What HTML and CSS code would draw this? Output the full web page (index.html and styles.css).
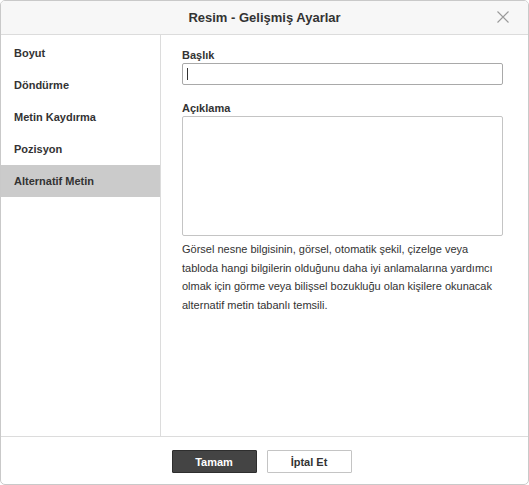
FILE: index.html
```html
<!DOCTYPE html>
<html lang="tr">
<head>
<meta charset="utf-8">
<link rel="stylesheet" href="styles.css">
</head>
<body>
<div class="dialog">
  <div class="header">
    <div class="title">Resim - Gelişmiş Ayarlar</div>
    <svg class="close" width="12" height="12" viewBox="0 0 12 12"><path d="M0.5 0.5 L11.5 11.5 M11.5 0.5 L0.5 11.5" stroke="#9a9a9a" stroke-width="1.1" fill="none"/></svg>
  </div>
  <div class="body">
    <div class="sidebar">
      <div class="item">Boyut</div>
      <div class="item">Döndürme</div>
      <div class="item">Metin Kaydırma</div>
      <div class="item">Pozisyon</div>
      <div class="item active">Alternatif Metin</div>
    </div>
    <div class="content">
      <div class="label">Başlık</div>
      <div class="input"><span class="caret"></span></div>
      <div class="label second">Açıklama</div>
      <div class="textarea"></div>
      <p class="desc">Görsel nesne bilgisinin, görsel, otomatik şekil, çizelge veya tabloda hangi bilgilerin olduğunu daha iyi anlamalarına yardımcı olmak için görme veya bilişsel bozukluğu olan kişilere okunacak alternatif metin tabanlı temsili.</p>
    </div>
  </div>
  <div class="footer">
    <button class="btn primary">Tamam</button>
    <button class="btn">İptal Et</button>
  </div>
</div>
</body>
</html>
```

FILE: styles.css
```css
html, body {
  margin: 0;
  padding: 0;
  background: #ffffff;
}
body {
  font-family: "Liberation Sans", Arial, sans-serif;
  color: #333333;
}
.dialog {
  width: 529px;
  height: 485px;
  box-sizing: border-box;
  border: 1px solid #c9c9c9;
  border-radius: 5px;
  overflow: hidden;
  display: flex;
  flex-direction: column;
  background: #ffffff;
}
.header {
  height: 33px;
  flex: none;
  background: #f7f7f7;
  border-bottom: 1px solid #dcdcdc;
  display: flex;
  align-items: center;
  justify-content: center;
  position: relative;
}
.title {
  font-size: 13px;
  font-weight: bold;
  color: #333333;
}
.close {
  position: absolute;
  right: 19px;
  top: 10px;
}
.body {
  flex: 1;
  display: flex;
  min-height: 0;
}
.sidebar {
  width: 159px;
  flex: none;
  border-right: 1px solid #dcdcdc;
  padding-top: 2px;
}
.item {
  height: 32px;
  line-height: 32px;
  padding-left: 13px;
  font-size: 11px;
  font-weight: bold;
  color: #333333;
}
.item.active {
  background: #cbcbcb;
}
.content {
  flex: 1;
  padding: 13px 25px 0 21px;
}
.label {
  font-size: 11px;
  font-weight: bold;
  line-height: 14px;
  margin-bottom: 1px;
  color: #333333;
}
.label.second {
  margin-top: 16px;
}
.input {
  height: 20px;
  border: 1px solid #a9a9a9;
  border-radius: 2px;
  display: flex;
  align-items: center;
  padding-left: 4px;
}
.caret {
  width: 1px;
  height: 12px;
  background: #333333;
}
.textarea {
  height: 118px;
  border: 1px solid #c4c4c4;
  border-radius: 2px;
}
.desc {
  margin: 4px 0 0 0;
  font-size: 11px;
  line-height: 18.7px;
  color: #333333;
}
.footer {
  height: 48px;
  flex: none;
  border-top: 1px solid #dcdcdc;
  display: flex;
  justify-content: center;
  align-items: flex-start;
  gap: 10px;
  padding-top: 13px;
  padding-right: 6px;
  box-sizing: border-box;
}
.btn {
  width: 85px;
  height: 23px;
  box-sizing: border-box;
  border: 1px solid #c4c4c4;
  background: #ffffff;
  color: #333333;
  font-family: "Liberation Sans", Arial, sans-serif;
  font-size: 11px;
  font-weight: bold;
  padding: 0;
  border-radius: 1px;
}
.btn.primary {
  background: #444444;
  border-color: #2e2e2e;
  color: #ffffff;
}
```
